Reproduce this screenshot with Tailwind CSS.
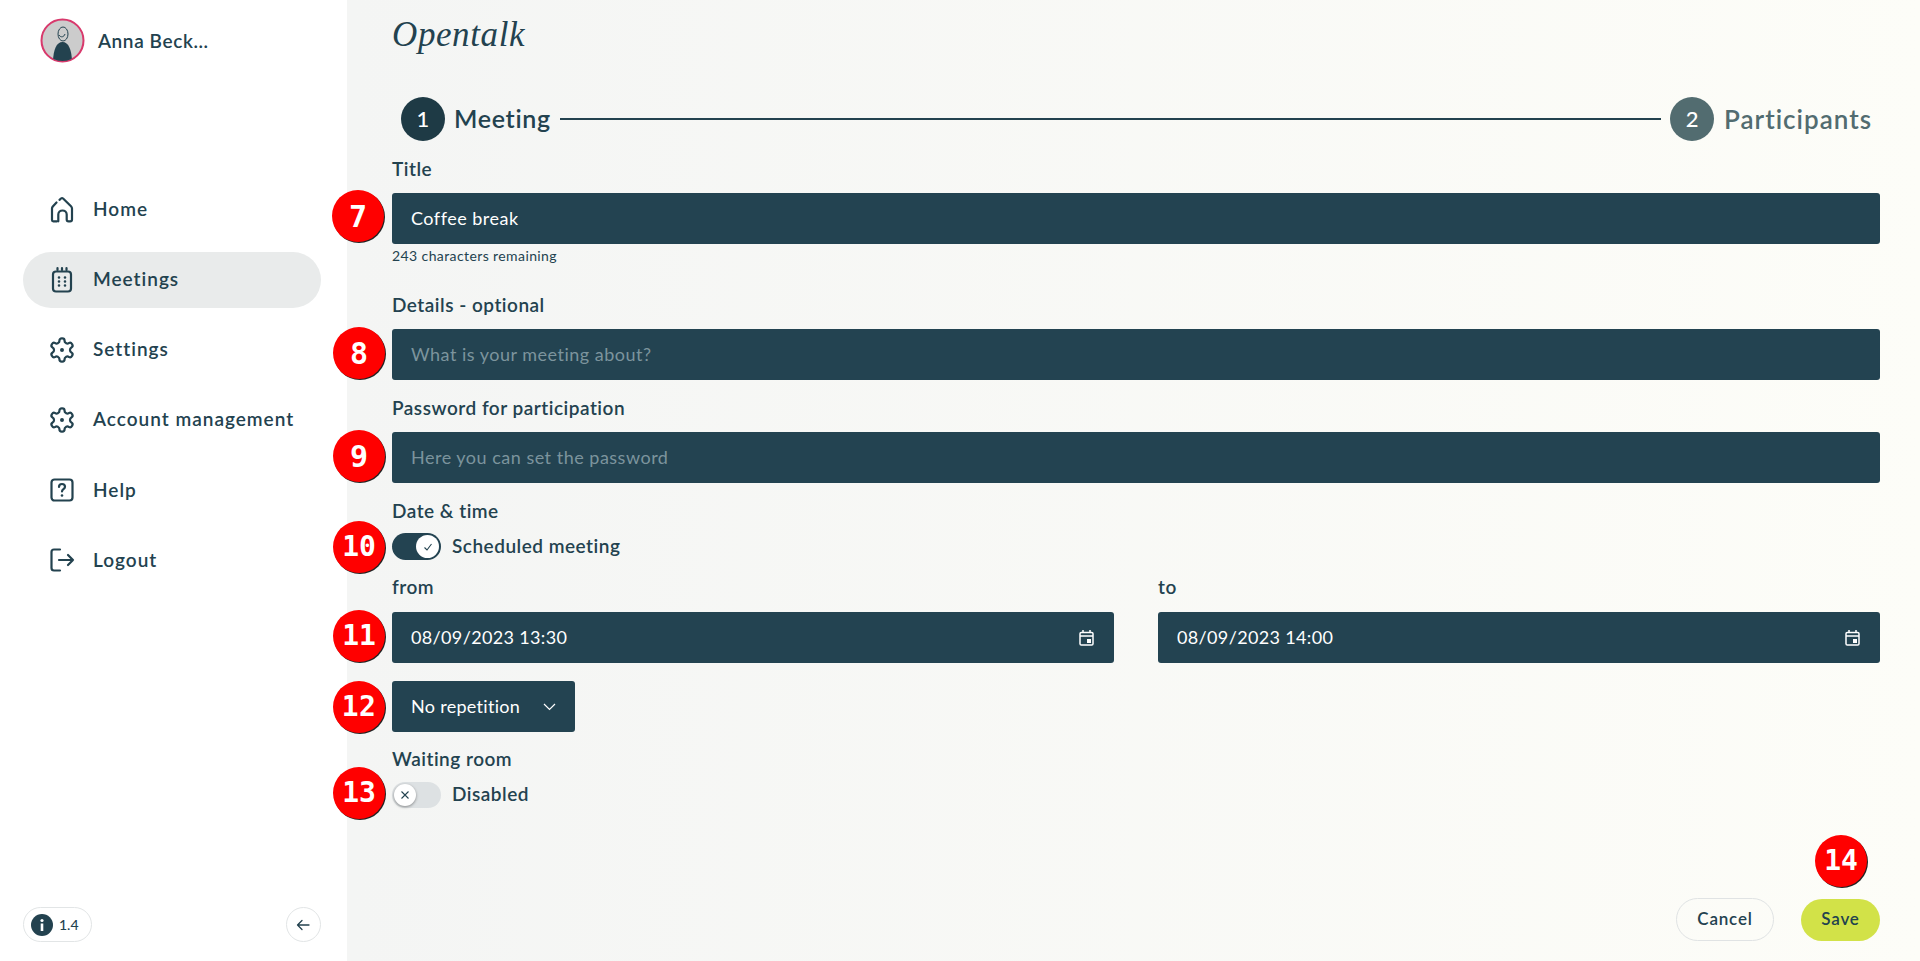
<!DOCTYPE html>
<html lang="en">
  <head>
    <meta charset="UTF-8" />
    <meta name="viewport" content="width=device-width, initial-scale=1.0" />
    <title>Opentalk - Create meeting</title>
    <script src="https://cdn.jsdelivr.net/npm/@tailwindcss/browser@4"></script>
  </head>
  <body class="h-[961px] overflow-hidden bg-white font-['Lato',sans-serif] text-[#23424f]">
    <div class="flex h-full">
      <!-- Sidebar -->
      <aside class="flex w-[347px] shrink-0 flex-col bg-white pb-[19px]">
        <div class="mt-[18px] ml-[40px] flex h-[44px] items-center gap-[13px]">
          <svg width="45" height="45" viewBox="0 0 45 45" class="shrink-0">
            <defs><clipPath id="avatarClip"><circle cx="22.5" cy="22.5" r="20.5" /></clipPath></defs>
            <circle cx="22.5" cy="22.5" r="21" fill="#cccccc" stroke="#d8396c" stroke-width="2" />
            <g clip-path="url(#avatarClip)">
              <path d="M13 45c0-12 3-21 9.500-21S32 33 32 45z" fill="#23424f" />
              <ellipse cx="23" cy="16" rx="5" ry="7" fill="none" stroke="#23424f" stroke-width="1" />
              <path d="M19 17c2 3 5 2 6-1" fill="none" stroke="#23424f" stroke-width="1" />
            </g>
          </svg>
          <span class="text-[19px] leading-none font-semibold tracking-[0.6px]">Anna Beck...</span>
        </div>

        <nav class="mt-[120px] ml-[23px] flex w-[298px] flex-col gap-[14px] text-[19px] font-semibold tracking-[1px]">
          <a class="flex h-[56px] items-center gap-[17px] rounded-full pl-[25px]">
            <svg width="28" height="28" viewBox="0 0 28 28" fill="none" stroke="#23424f" stroke-width="2.200" stroke-linecap="round" stroke-linejoin="round">
              <path d="M8.500 6.500 4.800 10.500c-.5.6-.8 1.300-.8 2V24c0 .8.500 1.300 1.300 1.300H9" />
              <path d="M11.500 3.800 13 2.500c.6-.5 1.500-.5 2.100 0L23 10.300c.6.600 1 1.300 1 2.100V23.500c0 1-.8 1.800-1.800 1.800h-1.700c-1 0-1.800-.8-1.800-1.800v-5c0-2.400-1.900-4-4.200-4s-4.200 1.600-4.200 4v6.800" />
            </svg>
            <span class="mb-[2px]">Home</span>
          </a>
          <a class="flex h-[56px] items-center gap-[17px] rounded-full bg-[#e9ebeb] pl-[25px]">
            <svg width="28" height="28" viewBox="0 0 28 28" fill="none" stroke="#23424f" stroke-width="2.200" stroke-linecap="round" stroke-linejoin="round">
              <rect x="5" y="5.500" width="18" height="20" rx="3" />
              <path d="M9.500 2v2M14 2v2M18.500 2v2" />
              <path d="M11 11.500h.01M17 11.500h.01M11 15.500h.01M17 15.500h.01M11 19.500h.01M17 19.500h.01" stroke-width="2.600" />
            </svg>
            <span class="mb-[2px]">Meetings</span>
          </a>
          <a class="flex h-[56px] items-center gap-[17px] rounded-full pl-[25px]">
            <svg width="28" height="28" viewBox="0 0 24 24" fill="none" stroke="#23424f" stroke-width="1.900" stroke-linecap="round" stroke-linejoin="round">
              <path d="M12.220 2h-.44a2 2 0 0 0-2 2v.18a2 2 0 0 1-1 1.730l-.43.250a2 2 0 0 1-2 0l-.15-.08a2 2 0 0 0-2.730.730l-.22.380a2 2 0 0 0 .730 2.730l.15.100a2 2 0 0 1 1 1.720v.510a2 2 0 0 1-1 1.740l-.15.090a2 2 0 0 0-.730 2.730l.22.380a2 2 0 0 0 2.730.730l.15-.08a2 2 0 0 1 2 0l.43.250a2 2 0 0 1 1 1.730V20a2 2 0 0 0 2 2h.44a2 2 0 0 0 2-2v-.18a2 2 0 0 1 1-1.730l.43-.25a2 2 0 0 1 2 0l.15.080a2 2 0 0 0 2.730-.730l.22-.39a2 2 0 0 0-.730-2.730l-.15-.08a2 2 0 0 1-1-1.740v-.5a2 2 0 0 1 1-1.740l.15-.09a2 2 0 0 0 .730-2.730l-.22-.38a2 2 0 0 0-2.730-.730l-.15.080a2 2 0 0 1-2 0l-.43-.25a2 2 0 0 1-1-1.730V4a2 2 0 0 0-2-2z" />
              <circle cx="12" cy="12" r="1.700" fill="#23424f" stroke="none" />
            </svg>
            <span class="mb-[2px]">Settings</span>
          </a>
          <a class="flex h-[56px] items-center gap-[17px] rounded-full pl-[25px]">
            <svg width="28" height="28" viewBox="0 0 24 24" fill="none" stroke="#23424f" stroke-width="1.900" stroke-linecap="round" stroke-linejoin="round">
              <path d="M12.220 2h-.44a2 2 0 0 0-2 2v.18a2 2 0 0 1-1 1.730l-.43.250a2 2 0 0 1-2 0l-.15-.08a2 2 0 0 0-2.730.730l-.22.380a2 2 0 0 0 .730 2.730l.15.100a2 2 0 0 1 1 1.720v.510a2 2 0 0 1-1 1.740l-.15.090a2 2 0 0 0-.730 2.730l.22.380a2 2 0 0 0 2.730.730l.15-.08a2 2 0 0 1 2 0l.43.250a2 2 0 0 1 1 1.730V20a2 2 0 0 0 2 2h.44a2 2 0 0 0 2-2v-.18a2 2 0 0 1 1-1.730l.43-.25a2 2 0 0 1 2 0l.15.080a2 2 0 0 0 2.730-.730l.22-.39a2 2 0 0 0-.730-2.730l-.15-.08a2 2 0 0 1-1-1.740v-.5a2 2 0 0 1 1-1.740l.15-.09a2 2 0 0 0 .730-2.730l-.22-.38a2 2 0 0 0-2.730-.730l-.15.080a2 2 0 0 1-2 0l-.43-.25a2 2 0 0 1-1-1.730V4a2 2 0 0 0-2-2z" />
              <circle cx="12" cy="12" r="1.700" fill="#23424f" stroke="none" />
            </svg>
            <span class="mb-[2px]">Account management</span>
          </a>
          <a class="flex h-[56px] items-center gap-[17px] rounded-full pl-[25px]">
            <svg width="28" height="28" viewBox="0 0 28 28" fill="none" stroke="#23424f" stroke-width="2.200" stroke-linecap="round" stroke-linejoin="round">
              <rect x="3.500" y="3.500" width="21" height="21" rx="3" />
              <path d="M11 11c0-1.800 1.300-3 3-3s3 1.100 3 2.800c0 2.300-3 2.500-3 4.600" />
              <path d="M14 19.500h.01" stroke-width="2.600" />
            </svg>
            <span>Help</span>
          </a>
          <a class="flex h-[56px] items-center gap-[17px] rounded-full pl-[25px]">
            <svg width="28" height="28" viewBox="0 0 28 28" fill="none" stroke="#23424f" stroke-width="2.200" stroke-linecap="round" stroke-linejoin="round">
              <path d="M12 3.500H6a2.500 2.500 0 0 0-2.500 2.500v16A2.500 2.500 0 0 0 6 24.500h6" />
              <path d="M11 14h14M20 9l5 5-5 5" />
            </svg>
            <span>Logout</span>
          </a>
        </nav>

        <div class="mt-auto ml-[23px] flex w-[298px] items-center justify-between">
          <div class="flex h-[35px] w-[69px] items-center gap-[6px] rounded-full border border-[#e2e5e6] pl-[7px]">
            <svg width="22" height="22" viewBox="0 0 22 22">
              <circle cx="11" cy="11" r="11" fill="#23424f" />
              <rect x="9.700" y="9.500" width="2.600" height="7.500" fill="#ffffff" />
              <circle cx="11" cy="6.500" r="1.600" fill="#ffffff" />
            </svg>
            <span class="text-[14px] leading-none font-medium">1.4</span>
          </div>
          <button class="flex h-[35px] w-[35px] items-center justify-center rounded-full border border-[#e2e5e6] pr-[2px]">
            <svg width="14" height="14" viewBox="0 0 14 14" fill="none" stroke="#23424f" stroke-width="1.300" stroke-linecap="round" stroke-linejoin="round">
              <path d="M13 7H1.500M6 2.500 1.500 7 6 11.500" />
            </svg>
          </button>
        </div>
      </aside>

      <!-- Main form -->
      <main class="flex min-w-0 flex-1 flex-col bg-gradient-to-r from-[#f4f5f4] to-[#fdfdf8] pr-[40px] pb-[20px] pl-[45px]">
        <div class="mt-[18px] flex h-[32px] items-center">
          <span class="font-['Liberation_Serif',serif] text-[35px] leading-none tracking-[0.6px] text-[#23424f] italic">Opentalk</span>
        </div>

        <div class="mt-[47px] flex h-[44px] items-center pl-[9px]">
          <span class="flex h-[44px] w-[44px] items-center justify-center rounded-full bg-[#1e3a45] pb-[2px] text-[22px] font-medium text-white">1</span>
          <span class="ml-[9px] text-[25px] font-semibold tracking-[0.7px]">Meeting</span>
          <div class="mx-[9px] h-[2px] flex-1 bg-[#23424f]"></div>
          <span class="flex h-[44px] w-[44px] items-center justify-center rounded-full bg-[#526c70] pb-[2px] text-[22px] font-medium text-white">2</span>
          <span class="mr-[8px] ml-[10px] text-[26px] font-semibold tracking-[1px] text-[#526c70]">Participants</span>
        </div>

        <label class="mt-[18px] block h-5 text-[19px] leading-5 font-semibold tracking-[0.5px]">Title</label>
        <div class="relative mt-[14px]">
          <span class="absolute top-[-3px] left-[-60px] flex h-[52px] w-[52px] items-center justify-center rounded-full bg-[#ff0000] font-['DejaVu_Sans_Mono',monospace] text-[30px] font-bold text-white shadow-[1px_1px_0_#222]">7</span>
          <input value="Coffee break" class="block h-[51px] w-full rounded-[3px] bg-[#234351] px-[19px] pb-[2px] text-[18px] tracking-[0.5px] text-white outline-none" />
        </div>
        <p class="mt-[5px] h-[14px] text-[14px] leading-[14px] tracking-[0.4px]">243 characters remaining</p>

        <label class="mt-[32px] block h-5 text-[19px] leading-5 font-semibold tracking-[0.5px]">Details - optional</label>
        <div class="relative mt-[14px]">
          <span class="absolute top-[-2px] left-[-59px] flex h-[52px] w-[52px] items-center justify-center rounded-full bg-[#ff0000] font-['DejaVu_Sans_Mono',monospace] text-[30px] font-bold text-white shadow-[1px_1px_0_#222]">8</span>
          <input placeholder="What is your meeting about?" class="block h-[51px] w-full rounded-[3px] bg-[#234351] px-[19px] pb-[2px] text-[18px] tracking-[0.5px] text-white outline-none placeholder:text-[#7c949d]" />
        </div>

        <label class="mt-[18px] block h-5 text-[19px] leading-5 font-semibold tracking-[0.5px]">Password for participation</label>
        <div class="relative mt-[14px]">
          <span class="absolute top-[-2px] left-[-59px] flex h-[52px] w-[52px] items-center justify-center rounded-full bg-[#ff0000] font-['DejaVu_Sans_Mono',monospace] text-[30px] font-bold text-white shadow-[1px_1px_0_#222]">9</span>
          <input placeholder="Here you can set the password" class="block h-[51px] w-full rounded-[3px] bg-[#234351] px-[19px] pb-[2px] text-[18px] tracking-[0.5px] text-white outline-none placeholder:text-[#7c949d]" />
        </div>

        <label class="mt-[18px] block h-5 text-[19px] leading-5 font-semibold tracking-[0.5px]">Date &amp; time</label>
        <div class="relative mt-[12px] flex h-[27px] items-center gap-[11px]">
          <span class="absolute top-[-12px] left-[-59px] flex h-[52px] w-[52px] items-center justify-center rounded-full bg-[#ff0000] font-['DejaVu_Sans_Mono',monospace] text-[28px] font-bold text-white shadow-[1px_1px_0_#222]">10</span>
          <span class="flex h-[27px] w-[49px] items-center justify-end rounded-full bg-[#234351] pr-[2px]">
            <span class="flex h-[23px] w-[23px] items-center justify-center rounded-full bg-white">
              <svg width="10" height="10" viewBox="0 0 10 10" fill="none" stroke="#23424f" stroke-width="1.100"><path d="M1.500 5.500 4 8l4.500-6" /></svg>
            </span>
          </span>
          <span class="text-[19px] font-semibold tracking-[0.5px]">Scheduled meeting</span>
        </div>

        <div class="mt-[18px] grid grid-cols-2 gap-x-[44px]">
          <div>
            <label class="block h-5 pb-[1px] text-[19px] leading-[18px] font-semibold tracking-[0.5px]">from</label>
            <div class="relative mt-[14px] flex h-[51px] items-center rounded-[3px] bg-[#234351] pr-[20px] pl-[19px]">
              <span class="absolute top-[-2px] left-[-59px] flex h-[52px] w-[52px] items-center justify-center rounded-full bg-[#ff0000] font-['DejaVu_Sans_Mono',monospace] text-[28px] font-bold text-white shadow-[1px_1px_0_#222]">11</span>
              <input value="08/09/2023 13:30" class="mb-[1px] min-w-0 flex-1 bg-transparent text-[18px] tracking-[0.35px] text-white outline-none" />
              <svg width="15" height="16" viewBox="0 0 15 16" fill="none" stroke="#ffffff" stroke-width="1.500">
                <rect x="1" y="2.500" width="13" height="12.500" rx="1.300" />
                <path d="M1 6h13M4 0v3M11 0v3" />
                <rect x="8" y="9" width="4" height="4" fill="#ffffff" stroke="none" />
              </svg>
            </div>
          </div>
          <div>
            <label class="block h-5 pb-[1px] text-[19px] leading-[18px] font-semibold tracking-[0.5px]">to</label>
            <div class="mt-[14px] flex h-[51px] items-center rounded-[3px] bg-[#234351] pr-[20px] pl-[19px]">
              <input value="08/09/2023 14:00" class="mb-[1px] min-w-0 flex-1 bg-transparent text-[18px] tracking-[0.35px] text-white outline-none" />
              <svg width="15" height="16" viewBox="0 0 15 16" fill="none" stroke="#ffffff" stroke-width="1.500">
                <rect x="1" y="2.500" width="13" height="12.500" rx="1.300" />
                <path d="M1 6h13M4 0v3M11 0v3" />
                <rect x="8" y="9" width="4" height="4" fill="#ffffff" stroke="none" />
              </svg>
            </div>
          </div>
        </div>

        <div class="relative mt-[18px] flex h-[51px] w-[183px] items-center justify-between rounded-[3px] bg-[#234351] px-[19px] text-[18px] tracking-[0.3px] text-white">
          <span class="absolute top-[0px] left-[-59px] flex h-[52px] w-[52px] items-center justify-center rounded-full bg-[#ff0000] font-['DejaVu_Sans_Mono',monospace] text-[28px] font-bold text-white shadow-[1px_1px_0_#222]">12</span>
          <span class="mb-[1px]">No repetition</span>
          <svg width="13" height="8" viewBox="0 0 13 8" fill="none" stroke="#ffffff" stroke-width="1.200"><path d="m1 1 5.500 5.500L12 1" /></svg>
        </div>

        <label class="mt-[17px] block h-5 text-[19px] leading-5 font-semibold tracking-[0.5px]">Waiting room</label>
        <div class="relative mt-[13px] flex h-[26px] items-center gap-[11px]">
          <span class="absolute top-[-15px] left-[-59px] flex h-[52px] w-[52px] items-center justify-center rounded-full bg-[#ff0000] font-['DejaVu_Sans_Mono',monospace] text-[28px] font-bold text-white shadow-[1px_1px_0_#222]">13</span>
          <span class="flex h-[26px] w-[49px] items-center rounded-full bg-[#dde1e3] pl-[2px]">
            <span class="flex h-[22px] w-[22px] items-center justify-center rounded-full bg-white shadow-[0_1px_3px_rgba(0,0,0,0.4)]">
              <svg width="10" height="10" viewBox="0 0 10 10" fill="none" stroke="#23424f" stroke-width="1.100"><path d="m1.500 1.500 7 7M8.500 1.500l-7 7" /></svg>
            </span>
          </span>
          <span class="mb-[2px] text-[19px] font-semibold tracking-[0.5px]">Disabled</span>
        </div>

        <div class="mt-auto flex items-center justify-end gap-[27px]">
          <button class="h-[43px] w-[98px] rounded-full border border-[#e0e3e4] pb-[1px] text-[17px] font-semibold tracking-[0.8px]">Cancel</button>
          <div class="relative">
            <span class="absolute top-[-64px] left-[14px] flex h-[52px] w-[52px] items-center justify-center rounded-full bg-[#ff0000] font-['DejaVu_Sans_Mono',monospace] text-[28px] font-bold text-white shadow-[1px_1px_0_#222]">14</span>
            <button class="block h-[42px] w-[79px] rounded-full bg-[#d2e248] pb-[2px] text-[17px] font-semibold tracking-[0.8px]">Save</button>
          </div>
        </div>
      </main>
    </div>
  </body>
</html>
